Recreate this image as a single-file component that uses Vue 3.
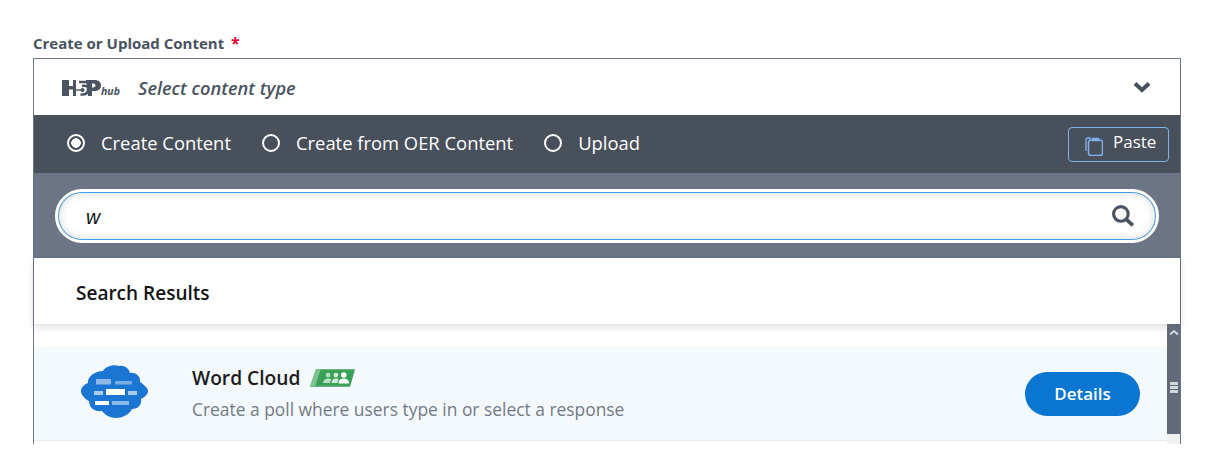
<script setup>
const modes = [
  { label: 'Create Content', active: true },
  { label: 'Create from OER Content', active: false },
  { label: 'Upload', active: false }
]
</script>

<template>
  <div class="page">
    <div class="field-label">Create or Upload Content <span class="req">*</span></div>
    <div class="hub">
      <div class="hub-head">
        <div class="logo">
          <svg width="39" height="16" viewBox="0 0 39 16">
            <path d="M0 0h7v6h4V0h3v16h-3V9.500H7V16H0z" fill="#4a5361" />
            <path d="M11 10h9" stroke="#4a5361" stroke-width="1.400" />
            <circle cx="20.500" cy="10" r="2" fill="#4a5361" />
            <path d="M17 2h8M20 6c4-1 6.500.5 6 4-.5 3.500-3.500 5-7.500 4.500" fill="none" stroke="#4a5361" stroke-width="2.400" />
            <path d="M24 0h8c4.500 0 7 2 7 5.500s-2.500 5.500-7 5.500h-2v5h-4zM30 3.500v4h1c1.500 0 2.500-.8 2.500-2s-1-2-2.500-2z" fill="#4a5361" fill-rule="evenodd" />
          </svg>
          <span class="hub-word">hub</span>
        </div>
        <span class="select-text">Select content type</span>
        <svg class="chevron" width="18" height="12" viewBox="0 0 18 12">
          <path d="M2 2.500 9 9l7-6.500" fill="none" stroke="#46505e" stroke-width="4" />
        </svg>
      </div>

      <div class="mode-bar">
        <label v-for="m in modes" :key="m.label" class="mode">
          <span class="radio" :class="{ on: m.active }"></span>
          <span>{{ m.label }}</span>
        </label>
        <button class="paste">
          <svg width="18" height="20" viewBox="0 0 18 20" fill="none" stroke="#7fb3ea" stroke-width="1.300">
            <path d="M1 15V3.500C1 2.500 1.600 2 2.500 2H6" />
            <rect x="3.500" y="4" width="14" height="15.500" rx="2.500" stroke-width="1.500" />
            <path d="M7.500 4.500V2.500h6v2z" fill="#7fb3ea" />
          </svg>
          <span>Paste</span>
        </button>
      </div>

      <div class="search-bar">
        <div class="search-box">
          <span class="query">w</span>
          <svg width="25" height="25" viewBox="0 0 24 24" fill="none" stroke="#4a5361">
            <circle cx="9.500" cy="9.500" r="7" stroke-width="3" />
            <path d="m15 15 6 5.500" stroke-width="3.600" />
          </svg>
        </div>
      </div>

      <div class="results-head">Search Results</div>

      <div class="list">
        <div class="list-scroll">
          <div class="gap"></div>
          <div class="item">
            <svg class="cloud" width="67" height="53" viewBox="0 0 67 53">
              <path d="M22 6C25 1 33-1 38 1c5-1 10 2 11 7 5-1 11 3 10 9 3 2 8 6 8 9 0 4-5 7-7 8 1 6-3 10-9 10-3 6-10 9-16 9s-11-3-14-7c-7 1-13-3-13-10-4-2-8-6-8-10s4-7 7-8C6 12 14 6 22 6z" fill="#1a76d2" />
              <rect x="15" y="14" width="15" height="5.500" fill="#8db8e8" />
              <rect x="34" y="16" width="17" height="3.500" fill="#78ace4" />
              <rect x="13" y="26" width="9" height="4" fill="#a9cbf0" />
              <rect x="25" y="24" width="19" height="6" fill="#fff" />
              <rect x="47" y="26" width="9" height="4" fill="#a9cbf0" />
              <rect x="14" y="36" width="14" height="4" fill="#fff" />
              <rect x="31" y="36" width="17" height="4" fill="#8db8e8" />
            </svg>
            <div class="item-text">
              <div class="item-title">
                <span>Word Cloud</span>
                <svg width="45" height="18" viewBox="0 0 46 18">
                  <path d="M6 0h40l-5 18H0z" fill="#3ba058" />
                  <path d="M6 0h5L5 18H0z" fill="#7cc48f" />
                  <circle cx="18.500" cy="6" r="2.400" fill="#b7e0c3" />
                  <circle cx="26.500" cy="6" r="2.400" fill="#d2ecd9" />
                  <circle cx="34.500" cy="6" r="2.800" fill="#fff" />
                  <path d="M13.500 14c.3-3 2-4.500 5-4.500 1.500 0 2.500.3 3.300 1-.8 1-1.200 2.200-1.300 3.500z" fill="#b7e0c3" />
                  <path d="M22 14c.3-3 2-4.500 4.500-4.500 1.200 0 2 .3 2.800 1-.8 1-1.200 2.200-1.300 3.500z" fill="#d2ecd9" />
                  <path d="M29 14.500c.2-3.300 2.300-5 5.500-5s5.300 1.700 5.500 5z" fill="#fff" />
                </svg>
              </div>
              <div class="item-desc">Create a poll where users type in or select a response</div>
            </div>
            <button class="details">Details</button>
          </div>
        </div>
        <div class="scrollbar">
          <div class="thumb">
            <svg class="up" width="10" height="7" viewBox="0 0 10 7">
              <path d="M1 5.500 5 2l4 3.500" fill="none" stroke="#d3d7dd" stroke-width="2" />
            </svg>
            <span class="grip"></span>
          </div>
        </div>
      </div>
    </div>
  </div>
</template>

<style>
html, body { margin: 0; background: #fff; overflow: hidden; }
</style>

<style scoped>
.page {
  width: 1214px;
  height: 464px;
  box-sizing: border-box;
  padding: 34px 33px 0;
  overflow: hidden;
  font-family: "Open Sans", sans-serif;
}

.field-label {
  font-size: 15px;
  font-weight: 700;
  line-height: 18px;
  height: 24px;
  color: #48525f;
  white-space: pre;
}
.req { color: #e4002b; font-size: 16px; margin-left: 3px; }

.hub {
  width: 1148px;
  height: 386px;
  box-sizing: border-box;
  border: 1px solid #6b7686;
  border-bottom: none;
}

.hub-head {
  height: 56px;
  display: flex;
  align-items: center;
  padding: 0 28px;
}
.logo { display: flex; align-items: flex-end; width: 76px; margin-top: 1px; }
.hub-word {
  font-size: 10.500px;
  font-style: italic;
  font-weight: 700;
  line-height: 10px;
  color: #4a5361;
  margin-left: 0;
}
.select-text {
  font-size: 18.200px;
  font-style: italic;
  font-weight: 600;
  color: #4a5361;
  margin-top: 2px;
}
.chevron { margin-left: auto; margin-right: 1px; }

.mode-bar {
  height: 58px;
  background: #48505c;
  display: flex;
  align-items: center;
  padding: 0 11px 0 33px;
  color: #fff;
  font-size: 18.400px;
}
.mode { display: flex; align-items: center; gap: 16px; margin-right: 31px; }
.mode span:last-child { margin-top: -3px; }
.radio {
  width: 18px;
  height: 18px;
  box-sizing: border-box;
  border: 2px solid #fff;
  border-radius: 50%;
  margin-top: -2px;
}
.radio.on { background: radial-gradient(circle, #fff 0 4.500px, transparent 5px); }

.paste {
  margin-left: auto;
  width: 101px;
  height: 35px;
  box-sizing: border-box;
  background: transparent;
  border: 1px solid #7fb3ea;
  border-radius: 4px;
  color: #fff;
  font-family: inherit;
  font-size: 17px;
  display: flex;
  align-items: center;
  gap: 10px;
  padding: 0 0 0 16px;
}
.paste svg { margin-top: 3px; }
.paste span { margin-top: -5px; }

.search-bar {
  height: 85px;
  background: #6b7585;
  display: flex;
  align-items: center;
  padding: 0 24px;
}
.search-box {
  flex: 1;
  height: 48px;
  box-sizing: border-box;
  background: #fff;
  border: 1.500px solid #3b9cf0;
  border-radius: 24px;
  outline: 3px solid #fff;
  outline-offset: 0;
  box-shadow: inset 0 0 10px rgba(0, 0, 0, 0.14);
  display: flex;
  align-items: center;
  justify-content: space-between;
  padding: 0 19px 0 27px;
  margin-top: 1px;
}
.query {
  font-family: "Liberation Sans", sans-serif;
  font-size: 19.500px;
  font-style: italic;
  color: #111;
  margin-top: 2px;
}

.results-head {
  height: 66px;
  box-sizing: border-box;
  padding: 3px 0 0 42px;
  display: flex;
  align-items: center;
  font-size: 19px;
  font-weight: 600;
  color: #141414;
  box-shadow: 0 3px 8px rgba(0, 0, 0, 0.14);
  position: relative;
}

.list { display: flex; height: 120px; }
.list-scroll { flex: 1; }
.gap { height: 23px; }

.item {
  height: 94px;
  box-sizing: border-box;
  background: #f4f9fe;
  border-bottom: 1px solid #e6e9ee;
  display: flex;
  align-items: center;
  padding: 0 27px 0 47px;
}
.cloud { margin-right: 44px; margin-bottom: 5px; }
.item-text { flex: 1; margin-bottom: 2px; }
.item-title {
  display: flex;
  align-items: center;
  gap: 10px;
  font-size: 19.200px;
  font-weight: 600;
  color: #1c1c1c;
  line-height: 26px;
}
.item-desc {
  font-size: 17.400px;
  color: #727b86;
  line-height: 24px;
  margin-top: 6px;
}
.details {
  width: 115px;
  height: 44px;
  border: none;
  border-radius: 22px;
  background: #0a76d2;
  color: #fff;
  font-family: inherit;
  font-size: 17px;
  font-weight: 600;
  padding: 0;
}

.scrollbar { width: 13px; background: #f1f1f1; }
.thumb {
  height: 110px;
  background: #606a78;
  position: relative;
}
.up { position: absolute; top: 5px; left: 2px; }
.grip {
  position: absolute;
  top: 58px;
  left: 3px;
  width: 8px;
  height: 3px;
  background: #d3d7dd;
  box-shadow: 0 4px 0 #d3d7dd, 0 8px 0 #d3d7dd;
}
</style>
